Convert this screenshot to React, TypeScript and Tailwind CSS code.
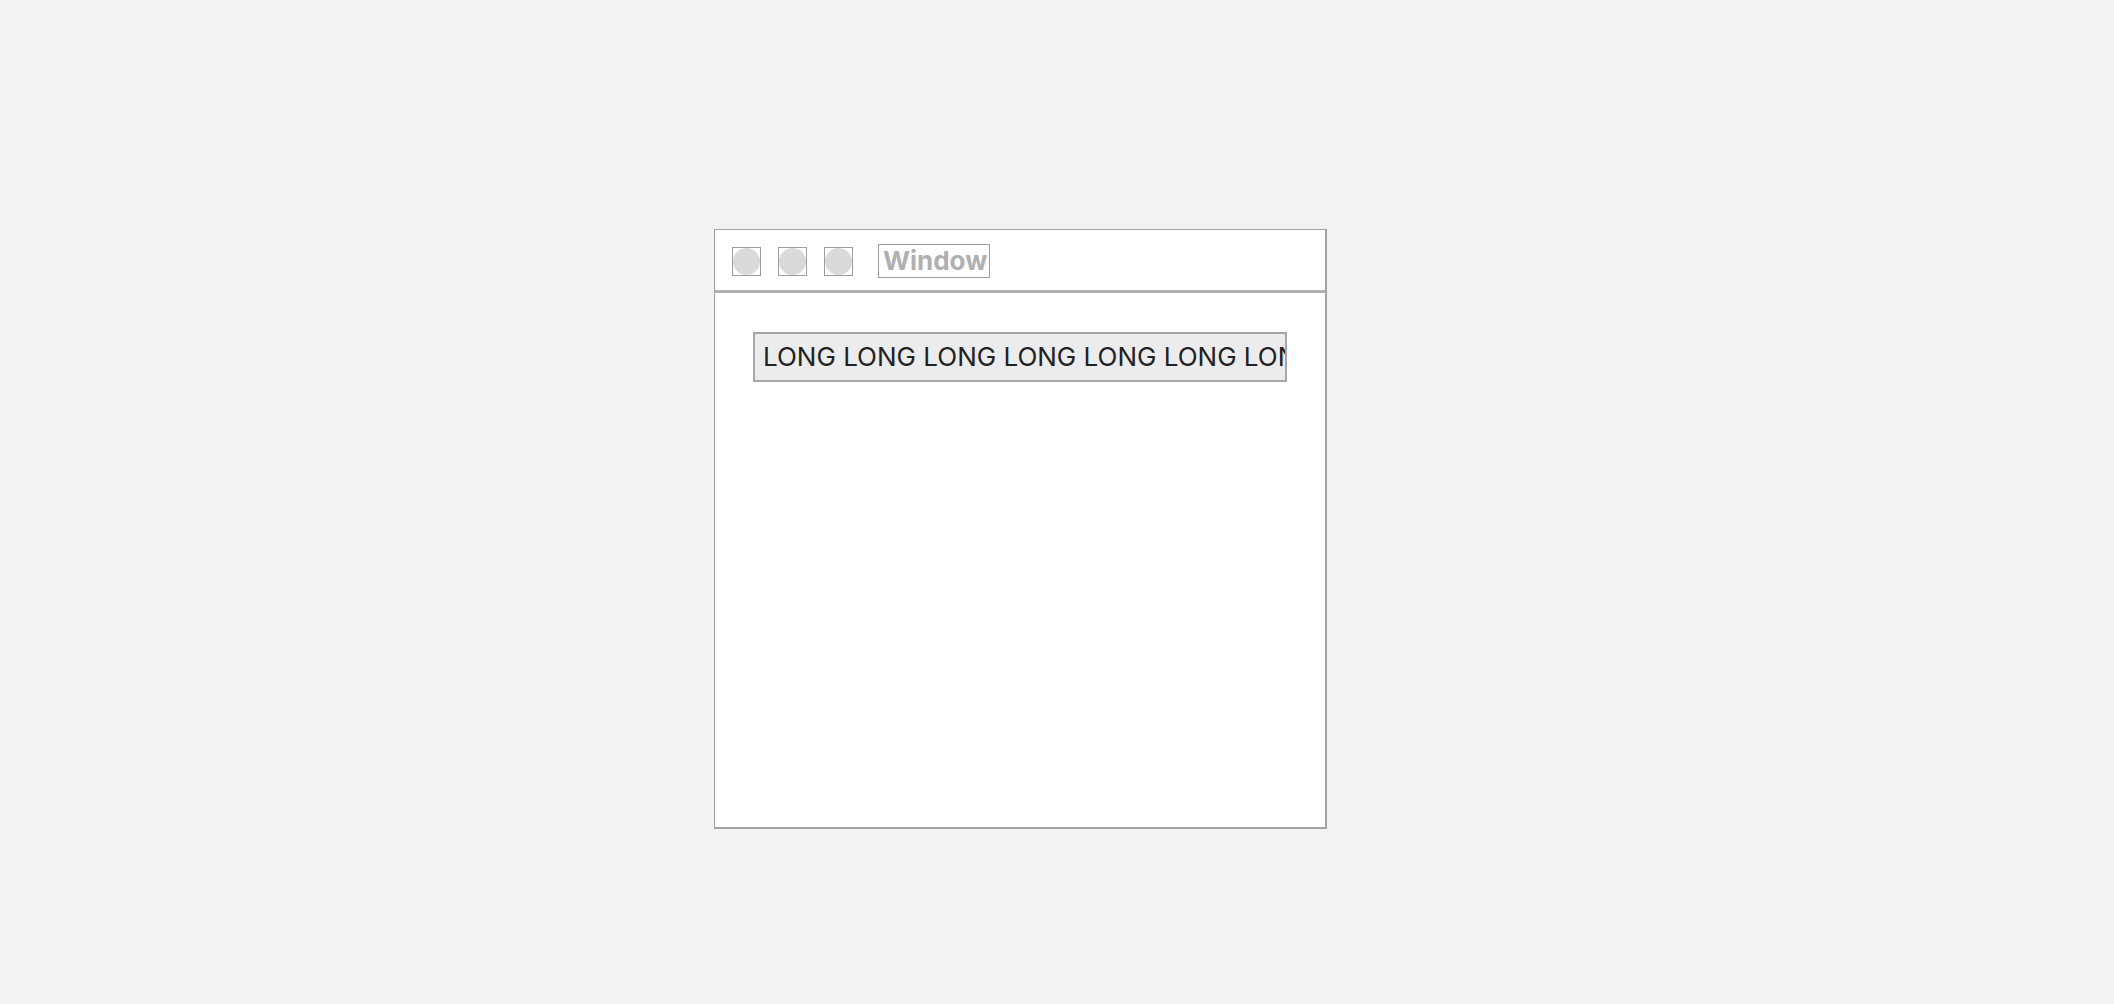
import React from 'react'

const font = { fontFamily: 'Inter, "Noto Sans", sans-serif' }

function WindowButton() {
    return (
        <div className="w-[29px] h-[29px] border border-[#9c9c9c] flex items-center justify-center">
            <div className="w-[27px] h-[27px] rounded-full bg-[#dadada]" />
        </div>
    )
}

export default function App() {
    return (
        <div className="min-h-[1004px] w-full bg-[#f2f2f2] pt-[229px] pl-[714px]" style={font}>
            <div className="w-[613px] h-[600px] bg-white border border-[#a3a3a3] border-r-2 border-b-2 flex flex-col">
                <div className="h-[63px] flex items-center pt-[2px] px-[17px] gap-[17px] border-b-[3px] border-[#b0b0b0] shrink-0">
                    <WindowButton />
                    <WindowButton />
                    <WindowButton />
                    <div className="ml-[8px] h-[34px] w-[112px] px-[4px] border border-[#9c9c9c] flex items-center text-[26px] font-bold text-[#b0b0b0] leading-none">
                        Window
                    </div>
                </div>
                <div className="pt-[39px] px-[38px]">
                    <div className="h-[50px] w-[534px] bg-[#ececec] border-2 border-[#a6a6a6] flex items-center pl-[8px] overflow-hidden whitespace-nowrap text-[26px] text-[#222222] leading-none">
                        LONG LONG LONG LONG LONG LONG LONG LONG LONG
                    </div>
                </div>
            </div>
        </div>
    )
}
